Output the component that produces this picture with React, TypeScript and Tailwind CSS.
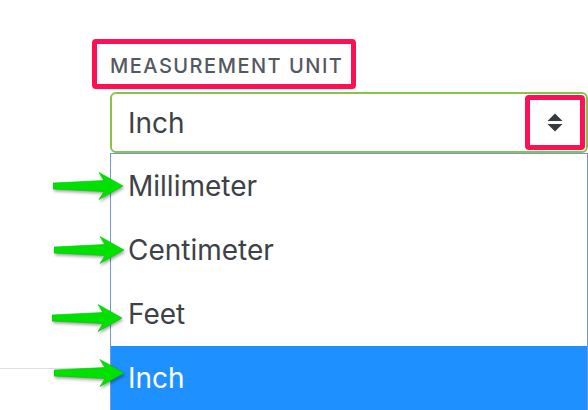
import React from 'react';

const units = ['Millimeter', 'Centimeter', 'Feet', 'Inch'];

function Arrow({ className }: { className: string }) {
  return (
    <svg
      className={`absolute drop-shadow-[1px_2px_1.5px_rgba(0,0,0,0.35)] ${className}`}
      width="72"
      height="30"
      viewBox="0 0 72 30"
    >
      <path d="M0,12 L51,9.5 L46,1.5 L70,15 L46,28.5 L51,20.5 L0,18 Z" fill="#00e100" stroke="#00c400" strokeWidth="0.6" />
    </svg>
  );
}

export default function App() {
  const selected = 'Inch';

  return (
    <div className="relative w-[588px] h-[410px] overflow-hidden bg-white font-['Inter','Liberation_Sans',sans-serif]">
      {/* underlying page divider peeking out from behind the menu */}
      <div className="absolute left-0 top-[368px] w-[110px] h-px bg-[#dcdfe2]" />

      <div className="pt-[39px]">
        {/* label, highlighted */}
        <div className="ml-[92px] inline-flex border-[5px] border-[#ff1054] rounded-[4px] pl-[13px] pr-[8px] pt-[10px] pb-[6px]">
          <span className="text-[20px] leading-[24px] font-medium tracking-[0.075em] text-[#54595f]">
            MEASUREMENT UNIT
          </span>
        </div>

        {/* select */}
        <div className="ml-[110px] mt-[3px] w-[478px] h-[61px] border-2 border-[#8bc34a] rounded-[6px] flex items-center justify-between pl-[16px] pr-px">
          <span className="text-[28px] leading-[34px] text-[#3d4248]">{selected}</span>
          <div className="w-[60px] h-[55px] border-[5px] border-[#ff1054] rounded-[4px] flex items-center justify-center">
            <svg width="16" height="20" viewBox="0 0 16 20">
              <path d="M8,0.5 L15.5,8 L0.5,8 Z" fill="#343a40" />
              <path d="M0.5,11 L15.5,11 L8,18.5 Z" fill="#343a40" />
            </svg>
          </div>
        </div>

        {/* open menu */}
        <div className="ml-[110px] w-[478px] border border-b-0 border-[#7099dc] bg-white">
          {units.map((u) => (
            <div
              key={u}
              className={`h-[64px] flex items-center pl-[17px] text-[28px] leading-[34px] ${
                u === selected ? 'bg-[#1e90ff] text-white' : 'text-[#3d4248]'
              }`}
            >
              {u}
            </div>
          ))}
        </div>
      </div>

      {/* annotation arrows */}
      <Arrow className="left-[53px] top-[171px]" />
      <Arrow className="left-[54px] top-[235px]" />
      <Arrow className="left-[52px] top-[303px]" />
      <Arrow className="left-[54px] top-[358px]" />
    </div>
  );
}
